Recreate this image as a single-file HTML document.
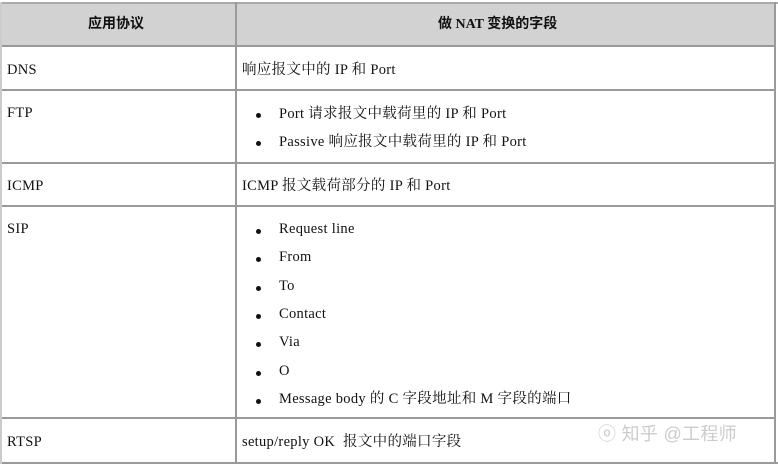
<!DOCTYPE html>
<html><head><meta charset="utf-8"><style>
body{margin:0;width:778px;height:465px;background:#fff;position:relative;overflow:hidden;font-family:"Liberation Serif","DejaVu Serif","Noto Serif CJK SC",serif;font-size:14.5px;color:#111}
.h{position:absolute;background:#d2d2d2}
.hl{position:absolute;height:2px;background:#9a9a9a}
.vl{position:absolute;width:2px;background:#9a9a9a}
.t{position:absolute;white-space:nowrap;line-height:16px;font-family:"Liberation Serif","Noto Serif CJK SC",serif;letter-spacing:0.3px}
.b{position:absolute;width:5px;height:5px;border-radius:50%;background:#111}
.hd{font-family:"Liberation Serif","Noto Sans CJK SC",serif;font-weight:bold;font-size:14px;letter-spacing:0}
</style></head><body>
<div class="h" style="left:2px;top:3px;width:772px;height:42px"></div>
<div class="hl" style="left:0;top:2px;width:778px;background:#aaa"></div>
<div class="hl" style="left:0;top:45px;width:776px"></div>
<div class="hl" style="left:0;top:89px;width:776px"></div>
<div class="hl" style="left:0;top:162px;width:776px"></div>
<div class="hl" style="left:0;top:205px;width:776px"></div>
<div class="hl" style="left:0;top:417px;width:776px"></div>
<div class="hl" style="left:0;top:462px;width:778px"></div>
<div class="vl" style="left:0;top:2px;height:462px;background:#ccc"></div>
<div class="vl" style="left:235px;top:2px;height:462px"></div>
<div class="vl" style="left:774px;top:2px;height:462px"></div>
<div class="t hd" style="left:88px;top:17px">应用协议</div>
<div class="t hd" style="left:438px;top:17px">做 NAT 变换的字段</div>
<div class="t" style="left:7px;top:62px">DNS</div>
<div class="t" style="left:242px;top:62px">响应报文中的 IP 和 Port</div>
<div class="t" style="left:7px;top:105px">FTP</div>
<div class="b" style="left:256px;top:113px"></div><div class="t" style="left:279px;top:106px">Port 请求报文中载荷里的 IP 和 Port</div>
<div class="b" style="left:256px;top:141px"></div><div class="t" style="left:279px;top:134px">Passive 响应报文中载荷里的 IP 和 Port</div>
<div class="t" style="left:7px;top:178px">ICMP</div>
<div class="t" style="left:242px;top:178px">ICMP 报文载荷部分的 IP 和 Port</div>
<div class="t" style="left:7px;top:221px">SIP</div>
<div class="b" style="left:256px;top:229px"></div><div class="t" style="left:279px;top:221px">Request line</div>
<div class="b" style="left:256px;top:257px"></div><div class="t" style="left:279px;top:249px">From</div>
<div class="b" style="left:256px;top:286px"></div><div class="t" style="left:279px;top:278px">To</div>
<div class="b" style="left:256px;top:314px"></div><div class="t" style="left:279px;top:306px">Contact</div>
<div class="b" style="left:256px;top:342px"></div><div class="t" style="left:279px;top:334px">Via</div>
<div class="b" style="left:256px;top:371px"></div><div class="t" style="left:279px;top:363px">O</div>
<div class="b" style="left:256px;top:399px"></div><div class="t" style="left:279px;top:391px">Message body 的 C 字段地址和 M 字段的端口</div>
<div class="t" style="left:7px;top:434px">RTSP</div>
<div class="t" style="left:242px;top:434px">setup/reply OK&nbsp; 报文中的端口字段</div>
<div class="t" style="left:598px;top:423px;font-size:18px;line-height:22px;color:#ccc;font-family:'Liberation Sans','Noto Sans CJK SC',sans-serif">ⓞ 知乎 @工程师</div>
</body></html>
